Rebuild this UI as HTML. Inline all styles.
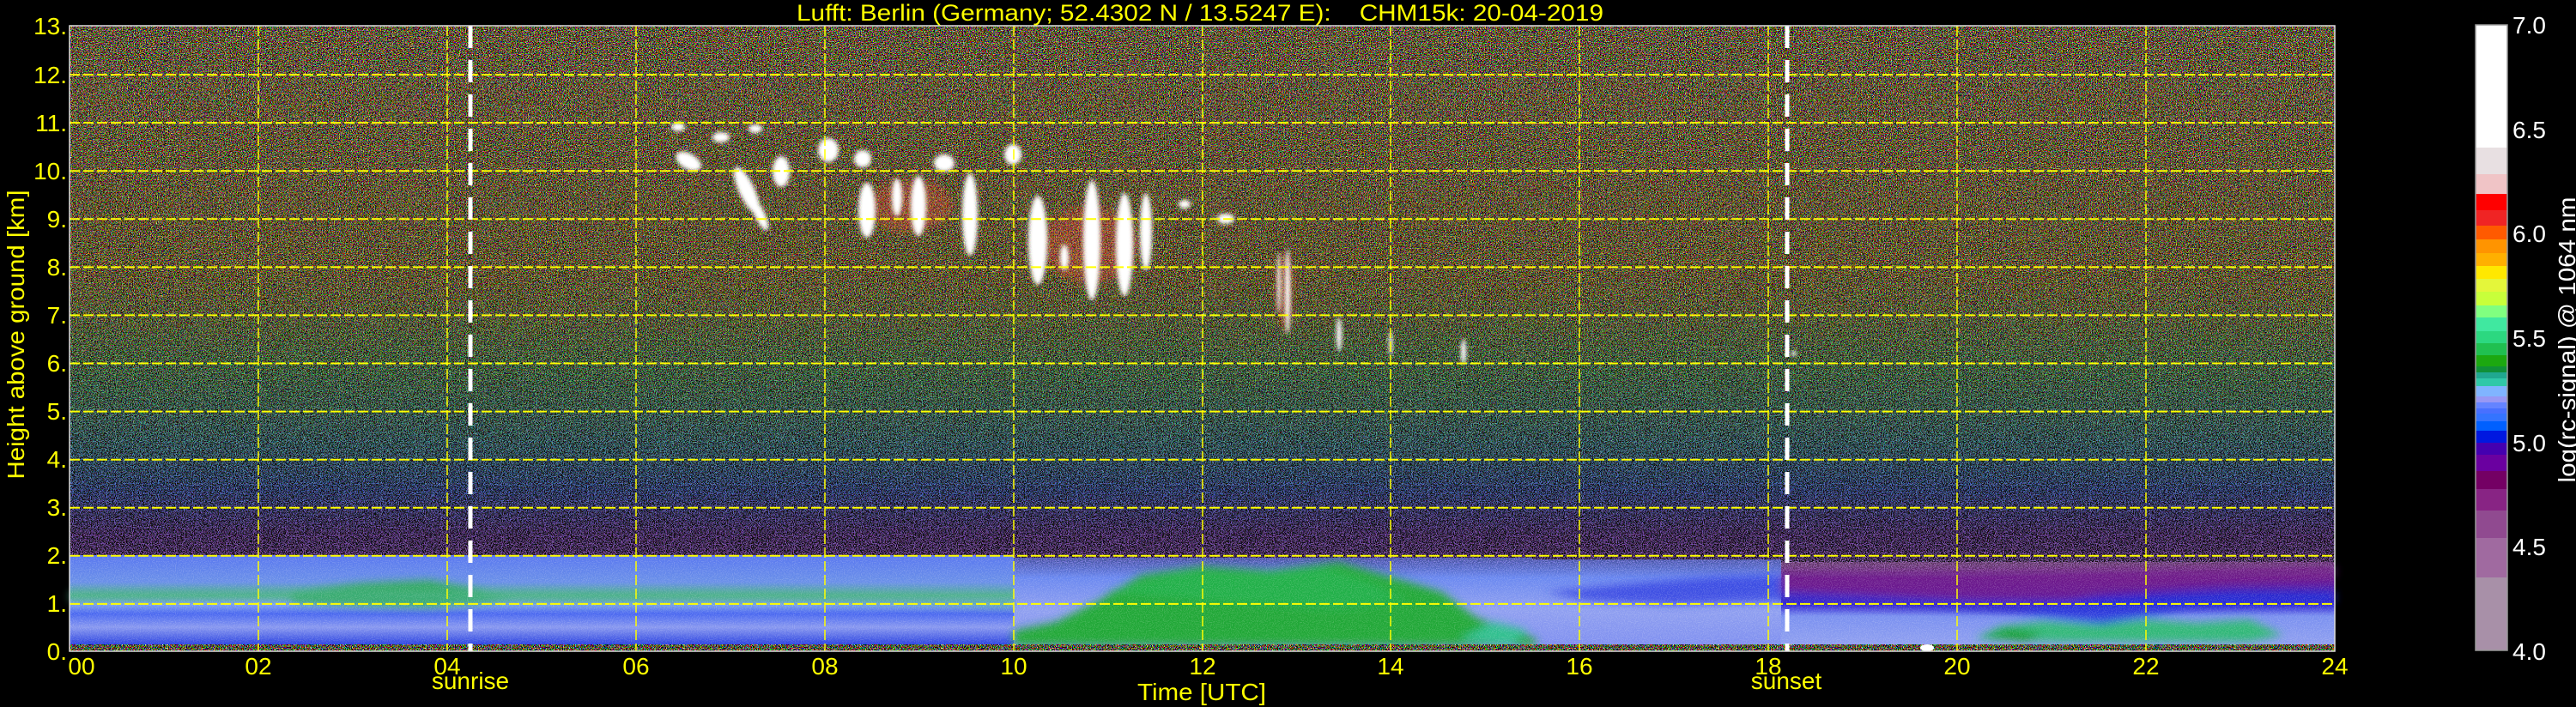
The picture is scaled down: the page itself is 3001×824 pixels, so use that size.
<!DOCTYPE html>
<html><head><meta charset="utf-8"><style>
html,body{margin:0;padding:0;background:#000;width:3001px;height:824px;overflow:hidden}
svg{display:block}
text{font-family:"Liberation Sans","DejaVu Sans",sans-serif}
</style></head><body>
<svg width="3001" height="824" viewBox="0 0 3001 824" xmlns="http://www.w3.org/2000/svg">
<defs>
<filter id="rgbn" x="0" y="0" width="100%" height="100%" color-interpolation-filters="sRGB">
 <feTurbulence type="fractalNoise" baseFrequency="0.85" numOctaves="1" seed="7"/>
 <feColorMatrix type="matrix" values="12 0 0 0 -5.9  0 12 0 0 -5.9  0 0 12 0 -6.3  0 0 0 0 1"/>
 <feComponentTransfer>
  <feFuncR type="discrete" tableValues="0 1"/>
  <feFuncG type="discrete" tableValues="0 1"/>
  <feFuncB type="discrete" tableValues="0 1"/>
 </feComponentTransfer>
</filter>
<filter id="speck" x="0" y="0" width="100%" height="100%" color-interpolation-filters="sRGB">
 <feTurbulence type="fractalNoise" baseFrequency="0.9" numOctaves="1" seed="3" result="t"/>
 <feColorMatrix in="t" type="matrix" values="0 0 0 0 0  0 0 0 0 0  0 0 0 0 0  14 0 0 0 -7.3" result="a"/>
 <feComposite in="SourceGraphic" in2="a" operator="in"/>
</filter>
<filter id="speck2" x="0" y="0" width="100%" height="100%" color-interpolation-filters="sRGB">
 <feTurbulence type="fractalNoise" baseFrequency="0.9" numOctaves="1" seed="11" result="t"/>
 <feColorMatrix in="t" type="matrix" values="0 0 0 0 0  0 0 0 0 0  0 0 0 0 0  0 14 0 0 -7.3" result="a"/>
 <feComposite in="SourceGraphic" in2="a" operator="in"/>
</filter>
<filter id="bl" x="-20%" y="-20%" width="140%" height="140%"><feGaussianBlur stdDeviation="5"/></filter>
<filter id="bl2" x="-50%" y="-50%" width="200%" height="200%"><feGaussianBlur stdDeviation="2.5"/></filter>
<linearGradient id="tint" x1="0" y1="30" x2="0" y2="752" gradientUnits="userSpaceOnUse">
 <stop offset="0" stop-color="#e09060"/>
 <stop offset="0.4" stop-color="#d0a040"/>
 <stop offset="0.55" stop-color="#60c080"/>
 <stop offset="0.68" stop-color="#50a0c0"/>
 <stop offset="0.75" stop-color="#5070e0"/>
 <stop offset="0.82" stop-color="#8050c0"/>
 <stop offset="1" stop-color="#c070c0"/>
</linearGradient>
<linearGradient id="rgbfade" x1="0" y1="30" x2="0" y2="752" gradientUnits="userSpaceOnUse">
 <stop offset="0" stop-color="#fff" stop-opacity="0.75"/>
 <stop offset="0.45" stop-color="#fff" stop-opacity="0.55"/>
 <stop offset="0.7" stop-color="#fff" stop-opacity="0.2"/>
 <stop offset="0.85" stop-color="#fff" stop-opacity="0.1"/>
 <stop offset="1" stop-color="#fff" stop-opacity="0.05"/>
</linearGradient>
<mask id="rgbmask"><rect x="81" y="30" width="2639" height="722" fill="url(#rgbfade)"/></mask>
<linearGradient id="lowL" x1="0" y1="647" x2="0" y2="752" gradientUnits="userSpaceOnUse">
 <stop offset="0" stop-color="#5a78f0"/>
 <stop offset="0.3" stop-color="#6a90e8"/>
 <stop offset="0.45" stop-color="#50b090"/>
 <stop offset="0.55" stop-color="#80a0f0"/>
 <stop offset="0.65" stop-color="#4a68f0"/>
 <stop offset="0.8" stop-color="#8898f0"/>
 <stop offset="1" stop-color="#2840e0"/>
</linearGradient>
<linearGradient id="lowR" x1="0" y1="655" x2="0" y2="752" gradientUnits="userSpaceOnUse">
 <stop offset="0" stop-color="#9a5aa0" stop-opacity="0.5"/>
 <stop offset="0.2" stop-color="#6a1a90"/>
 <stop offset="0.5" stop-color="#3020d0"/>
 <stop offset="0.65" stop-color="#7a90f0"/>
 <stop offset="1" stop-color="#90a0f0"/>
</linearGradient>
<linearGradient id="lowM" x1="0" y1="647" x2="0" y2="752" gradientUnits="userSpaceOnUse">
 <stop offset="0" stop-color="#5a70e0" stop-opacity="0.6"/>
 <stop offset="0.25" stop-color="#6a88f0"/>
 <stop offset="0.6" stop-color="#90a0f0"/>
 <stop offset="1" stop-color="#8090f0"/>
</linearGradient>
</defs>

<rect x="81" y="30" width="2639" height="729" fill="#000"/>
<rect x="81" y="30" width="2639" height="722" fill="url(#tint)" filter="url(#speck)"/>
<rect x="81" y="30" width="2639" height="722" fill="url(#tint)" filter="url(#speck2)" opacity="0.8"/>
<g mask="url(#rgbmask)"><rect x="81" y="30" width="2639" height="722" fill="#fff" filter="url(#rgbn)"/></g>

<g>
 <rect x="81" y="647" width="1100" height="105" fill="url(#lowL)"/>
 <rect x="1181" y="650" width="604" height="102" fill="url(#lowM)"/>
 <rect x="1785" y="652" width="290" height="100" fill="url(#lowM)"/>
 <rect x="2075" y="655" width="645" height="97" fill="url(#lowR)"/>
 <g filter="url(#bl)">
  <path d="M1181 752 L1181 735 L1230 725 L1280 700 L1330 670 L1400 660 L1480 665 L1560 655 L1620 672 L1680 690 L1720 720 L1790 745 L1790 752 Z" fill="#22a838"/>
  <path d="M1290 690 L1380 665 L1460 668 L1540 660 L1600 680 L1640 700 L1560 710 L1400 700 Z" fill="#20b048"/>
  <path d="M1700 745 L1740 725 L1780 735 L1760 752 Z" fill="#30c090"/>
  <path d="M340 690 L420 680 L500 676 L560 688 L600 700 L500 708 L420 706 L340 702 Z" fill="#30a860"/>
  <path d="M81 700 L300 695 L500 700 L700 702 L900 700 L1100 705 L1181 708 L1181 698 L900 690 L600 690 L300 688 L81 690 Z" fill="#48b088" opacity="0.7"/>
  <path d="M2300 745 L2330 730 L2380 724 L2440 728 L2500 722 L2560 726 L2620 722 L2660 740 L2620 748 L2400 748 Z" fill="#30b878"/>
  <path d="M2310 742 L2340 732 L2380 738 L2360 748 Z" fill="#18a030"/>
  <path d="M2075 672 L2300 672 L2500 666 L2720 660 L2720 672 L2600 678 L2450 692 L2350 712 L2250 708 L2150 704 L2075 700 Z" fill="#701a8a" opacity="0.8"/>
  <path d="M2075 700 L2200 705 L2350 715 L2450 728 L2550 710 L2650 705 L2720 702 L2720 690 L2600 690 L2450 700 L2300 700 L2075 690 Z" fill="#2030d8" opacity="0.8"/>
  <path d="M1800 690 L1900 680 L2000 672 L2075 670 L2075 700 L1950 705 L1850 700 Z" fill="#3040e0" opacity="0.8"/>
 </g>
 <rect x="81" y="647" width="2639" height="105" fill="#fff" filter="url(#speck)" opacity="0.15"/>
</g>
<rect x="81" y="751" width="2639" height="8" fill="#fff" filter="url(#rgbn)" opacity="0.9"/>
<ellipse cx="2245" cy="755" rx="8" ry="4" fill="#fff"/>

<!-- clouds -->
<g fill="#ff5040" opacity="0.3" filter="url(#bl)">
 <ellipse cx="1060" cy="240" rx="50" ry="30"/>
 <ellipse cx="1270" cy="285" rx="55" ry="45"/>
 <ellipse cx="1497" cy="340" rx="10" ry="45"/>
</g>
<g fill="#fff" filter="url(#bl2)">
 <ellipse cx="790" cy="148" rx="8" ry="5"/>
 <ellipse cx="840" cy="160" rx="10" ry="6"/>
 <ellipse cx="880" cy="150" rx="8" ry="5"/>
 <ellipse cx="802" cy="188" rx="16" ry="9" transform="rotate(30 802 188)"/>
 <ellipse cx="870" cy="222" rx="9" ry="30" transform="rotate(-25 870 222)"/>
 <ellipse cx="885" cy="250" rx="6" ry="20" transform="rotate(-25 885 250)"/>
 <ellipse cx="910" cy="200" rx="10" ry="18"/>
 <ellipse cx="965" cy="175" rx="12" ry="14"/>
 <ellipse cx="1010" cy="245" rx="10" ry="32"/>
 <ellipse cx="1005" cy="185" rx="10" ry="10"/>
 <ellipse cx="1045" cy="230" rx="6" ry="22"/>
 <ellipse cx="1070" cy="240" rx="9" ry="35"/>
 <ellipse cx="1100" cy="190" rx="12" ry="10"/>
 <ellipse cx="1130" cy="250" rx="9" ry="48"/>
 <ellipse cx="1180" cy="180" rx="10" ry="12"/>
 <ellipse cx="1209" cy="280" rx="11" ry="52"/>
 <ellipse cx="1240" cy="300" rx="5" ry="15"/>
 <ellipse cx="1272" cy="280" rx="10" ry="70"/>
 <ellipse cx="1310" cy="285" rx="10" ry="60"/>
 <ellipse cx="1335" cy="270" rx="7" ry="45"/>
 <ellipse cx="1380" cy="238" rx="7" ry="5"/>
 <ellipse cx="1428" cy="255" rx="10" ry="6"/>
 <ellipse cx="1500" cy="340" rx="3" ry="50"/>
 <ellipse cx="1490" cy="330" rx="2" ry="35"/>
 <ellipse cx="1560" cy="390" rx="3" ry="20"/>
 <ellipse cx="1620" cy="400" rx="2" ry="15"/>
 <ellipse cx="1705" cy="410" rx="3" ry="15"/>
 <ellipse cx="2090" cy="412" rx="3" ry="3"/>
</g>

<g stroke="#ffff00" stroke-width="2" stroke-dasharray="12 4" fill="none">
 <path d="M81 703.9H2720M81 647.8H2720M81 591.8H2720M81 535.7H2720M81 479.6H2720M81 423.5H2720M81 367.4H2720M81 311.4H2720M81 255.3H2720M81 199.2H2720M81 143.1H2720M81 87.1H2720"/>
 <path d="M301 30V759M521 30V759M741 30V759M961 30V759M1181 30V759M1401 30V759M1620 30V759M1840 30V759M2060 30V759M2280 30V759M2500 30V759" stroke-width="1.5"/>
</g>
<g stroke="#fff" stroke-width="5" stroke-dasharray="26 14">
 <path d="M548 30V759"/><path d="M2082 30V759"/>
</g>
<rect x="81" y="30" width="2639" height="729" fill="none" stroke="#ddd" stroke-width="1.5"/>

<text x="1398" y="24" fill="#ffff00" font-size="27" text-anchor="middle" textLength="940" lengthAdjust="spacingAndGlyphs" xml:space="preserve">Lufft: Berlin (Germany; 52.4302 N / 13.5247 E):    CHM15k: 20-04-2019</text>

<g fill="#ffff00" font-size="28" text-anchor="end">
 <text x="78" y="40">13.</text><text x="78" y="97">12.</text><text x="78" y="153">11.</text>
 <text x="78" y="209">10.</text><text x="78" y="265">9.</text><text x="78" y="321">8.</text>
 <text x="78" y="377">7.</text><text x="78" y="433">6.</text><text x="78" y="489">5.</text>
 <text x="78" y="545">4.</text><text x="78" y="601">3.</text><text x="78" y="657">2.</text>
 <text x="78" y="713">1.</text><text x="78" y="769">0.</text>
</g>
<text transform="translate(28 390) rotate(-90)" fill="#ffff00" font-size="28" text-anchor="middle" textLength="337" lengthAdjust="spacingAndGlyphs">Height above ground [km]</text>

<g fill="#ffff00" font-size="28" text-anchor="middle">
 <text x="95" y="786">00</text><text x="301" y="786">02</text><text x="521" y="786">04</text>
 <text x="741" y="786">06</text><text x="961" y="786">08</text><text x="1181" y="786">10</text>
 <text x="1401" y="786">12</text><text x="1620" y="786">14</text><text x="1840" y="786">16</text>
 <text x="2060" y="786">18</text><text x="2280" y="786">20</text><text x="2500" y="786">22</text>
 <text x="2720" y="786">24</text>
 <text x="548" y="803">sunrise</text>
 <text x="2081" y="803">sunset</text>
 <text x="1400" y="816" textLength="150" lengthAdjust="spacingAndGlyphs">Time [UTC]</text>
</g>

<g>
 <rect x="2884" y="29" width="37" height="143" fill="#ffffff"/>
 <rect x="2884" y="172" width="37" height="31" fill="#e8e0e2"/>
 <rect x="2884" y="203" width="37" height="23" fill="#f0c4c6"/>
 <rect x="2884" y="226" width="37" height="19" fill="#ff0000"/>
 <rect x="2884" y="245" width="37" height="18" fill="#f02424"/>
 <rect x="2884" y="263" width="37" height="16" fill="#ff5a00"/>
 <rect x="2884" y="279" width="37" height="16" fill="#ff9400"/>
 <rect x="2884" y="295" width="37" height="15" fill="#ffb000"/>
 <rect x="2884" y="310" width="37" height="15" fill="#ffe800"/>
 <rect x="2884" y="325" width="37" height="15" fill="#e4f63a"/>
 <rect x="2884" y="340" width="37" height="16" fill="#c8ff3a"/>
 <rect x="2884" y="356" width="37" height="14" fill="#80ff80"/>
 <rect x="2884" y="370" width="37" height="16" fill="#40e8a0"/>
 <rect x="2884" y="386" width="37" height="14" fill="#2cd880"/>
 <rect x="2884" y="400" width="37" height="14" fill="#20c050"/>
 <rect x="2884" y="414" width="37" height="13" fill="#1ca810"/>
 <rect x="2884" y="427" width="37" height="7" fill="#109038"/>
 <rect x="2884" y="434" width="37" height="7" fill="#20a890"/>
 <rect x="2884" y="441" width="37" height="9" fill="#30c8a8"/>
 <rect x="2884" y="450" width="37" height="12" fill="#80b4ff"/>
 <rect x="2884" y="462" width="37" height="7" fill="#9898f4"/>
 <rect x="2884" y="469" width="37" height="7" fill="#6484ff"/>
 <rect x="2884" y="476" width="37" height="6" fill="#4870ff"/>
 <rect x="2884" y="482" width="37" height="9" fill="#3474ff"/>
 <rect x="2884" y="491" width="37" height="11" fill="#0060ff"/>
 <rect x="2884" y="502" width="37" height="14" fill="#0018e0"/>
 <rect x="2884" y="516" width="37" height="14" fill="#4400b0"/>
 <rect x="2884" y="530" width="37" height="19" fill="#6a00a0"/>
 <rect x="2884" y="549" width="37" height="21" fill="#740064"/>
 <rect x="2884" y="570" width="37" height="25" fill="#882484"/>
 <rect x="2884" y="595" width="37" height="32" fill="#904a90"/>
 <rect x="2884" y="627" width="37" height="46" fill="#a06aa0"/>
 <rect x="2884" y="673" width="37" height="85" fill="#a890a8"/>
 <rect x="2884" y="29" width="37" height="729" fill="none" stroke="#999" stroke-width="1.5"/>
</g>
<g fill="#fff" font-size="28">
 <text x="2927" y="39">7.0</text><text x="2927" y="161">6.5</text><text x="2927" y="282">6.0</text>
 <text x="2927" y="404">5.5</text><text x="2927" y="526">5.0</text><text x="2927" y="647">4.5</text>
 <text x="2927" y="769">4.0</text>
</g>
<text transform="translate(3000 396) rotate(-90)" fill="#fff" font-size="28" text-anchor="middle" textLength="333" lengthAdjust="spacingAndGlyphs">log(rc-signal) @ 1064 nm</text>
</svg>
</body></html>
